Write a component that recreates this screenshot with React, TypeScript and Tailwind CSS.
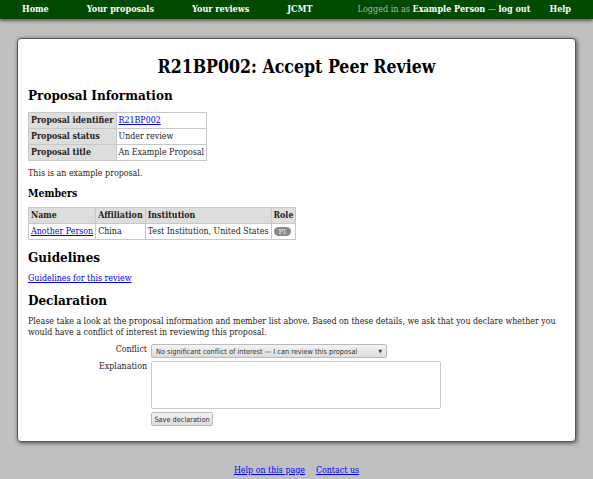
const th = "border border-[#c8c8c8] bg-[#dddddd] px-[2px] py-[1px] text-left font-bold leading-[13px]";
const td = "border border-[#c8c8c8] px-[2px] py-[1px] leading-[13px]";

export default function App() {
  return (
    <div className="h-screen overflow-hidden bg-[#c0c0c0] font-['DejaVu_Serif',serif] text-[8.8px] leading-[11px] text-[#222] [font-stretch:condensed]">
      <nav className="flex h-[19px] items-center bg-[#004a00] pl-[22px] text-[9px] font-bold text-white shadow-[0_2px_3px_rgba(0,0,0,0.5)]">
        <span className="mr-[38px]">Home</span>
        <span className="mr-[38px]">Your proposals</span>
        <span className="mr-[38px]">Your reviews</span>
        <span className="mr-[45px]">JCMT</span>
        <span className="mr-[19px] font-normal text-[#b4b4b4]">
          Logged in as <b className="text-white">Example Person</b> — <b className="text-white">log out</b>
        </span>
        <span>Help</span>
      </nav>
      <main className="mx-[17px] mt-[19px] rounded-[4px] border border-[#555] bg-white px-[10px] pb-[15px] pt-[18px] shadow-[1px_1px_4px_rgba(0,0,0,0.6)]">
        <h1 className="text-center text-[17.6px] leading-[20px] font-bold text-black">R21BP002: Accept Peer Review</h1>
        <h2 className="mt-[10px] text-[13.4px] leading-[16px] font-bold text-black">Proposal Information</h2>
        <table className="mt-[9px] border-collapse">
          <tbody>
            <tr>
              <th className={th}>Proposal identifier</th>
              <td className={td}><a href="#" className="text-[#0000ee] underline">R21BP002</a></td>
            </tr>
            <tr>
              <th className={th}>Proposal status</th>
              <td className={td}>Under review</td>
            </tr>
            <tr>
              <th className={th}>Proposal title</th>
              <td className={td}>An Example Proposal</td>
            </tr>
          </tbody>
        </table>
        <p className="mt-[7px]">This is an example proposal.</p>
        <h3 className="mt-[8px] text-[10.5px] leading-[13px] font-bold text-black">Members</h3>
        <table className="mt-[7px] border-collapse">
          <thead>
            <tr>
              <th className={th}>Name</th>
              <th className={th}>Affiliation</th>
              <th className={th}>Institution</th>
              <th className={th}>Role</th>
            </tr>
          </thead>
          <tbody>
            <tr>
              <td className={td}><a href="#" className="text-[#0000ee] underline">Another Person</a></td>
              <td className={td}>China</td>
              <td className={td}>Test Institution, United States</td>
              <td className={td}>
                <span className="inline-block rounded-full bg-[#8a8a8a] px-[5px] text-[8px] leading-[9px] text-[#e8e8e8]">PI</span>
              </td>
            </tr>
          </tbody>
        </table>
        <h2 className="mt-[9px] text-[13.4px] leading-[16px] font-bold text-black">Guidelines</h2>
        <p className="mt-[8px]"><a href="#" className="text-[#0000ee] underline">Guidelines for this review</a></p>
        <h2 className="mt-[8px] text-[13.4px] leading-[16px] font-bold text-black">Declaration</h2>
        <p className="mt-[8px]">
          Please take a look at the proposal information and member list above. Based on these details, we ask that you declare whether you would have a conflict of interest in reviewing this proposal.
        </p>
        <div className="mt-[6px] grid grid-cols-[119px_1fr] gap-x-[4px] gap-y-[3px]">
          <label className="text-right">Conflict</label>
          <div className="flex h-[14px] w-[236px] items-center justify-between rounded-[2px] border border-[#bbb] bg-gradient-to-b from-[#f4f4f4] to-[#dcdcdc] px-[4px] font-['DejaVu_Sans',sans-serif] text-[7.3px] text-[#333]">
            <span>No significant conflict of interest — I can review this proposal</span>
            <span className="text-[5px]">▼</span>
          </div>
          <label className="text-right">Explanation</label>
          <textarea className="h-[48px] w-[290px] resize-none rounded-[2px] border border-[#ccc]" />
          <span />
          <button className="h-[14px] w-[62px] rounded-[2px] border border-[#bbb] bg-gradient-to-b from-[#f4f4f4] to-[#dcdcdc] font-['DejaVu_Sans',sans-serif] text-[7.3px] text-[#333]">
            Save declaration
          </button>
        </div>
      </main>
      <footer className="mt-[23px] flex justify-center gap-[11px]">
        <a href="#" className="text-[#0000ee] underline">Help on this page</a>
        <a href="#" className="text-[#0000ee] underline">Contact us</a>
      </footer>
    </div>
  );
}
